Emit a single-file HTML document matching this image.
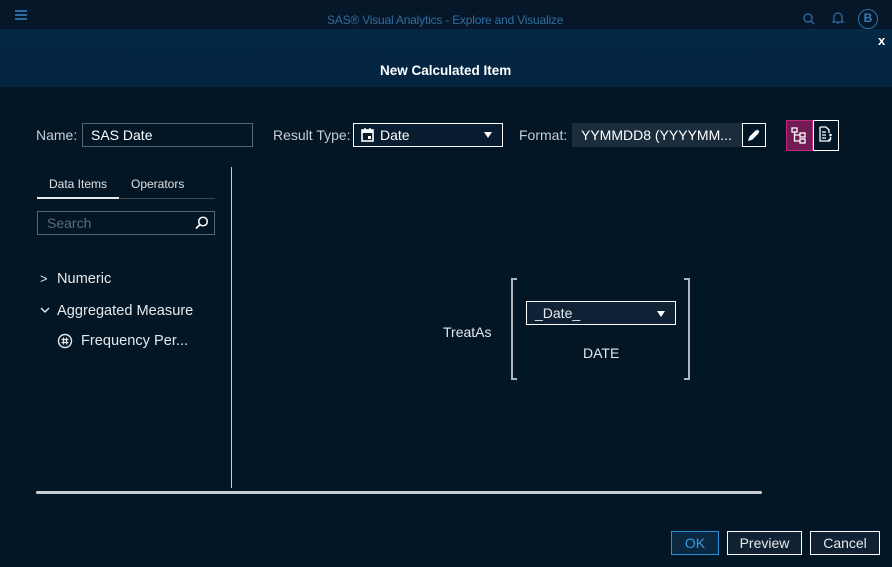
<!DOCTYPE html>
<html><head><meta charset="utf-8"><style>
*{box-sizing:border-box;margin:0;padding:0}
body{width:892px;height:567px;overflow:hidden;background:#031625;font-family:"Liberation Sans",sans-serif;color:#e6e9ec;position:relative}
.abs{position:absolute}
.top{left:0;top:0;width:892px;height:29px;background:#06172a}
.hdr{left:0;top:29px;width:892px;height:58px;background:linear-gradient(#052845,#032440)}
.t{font-size:14px;white-space:nowrap}
.tr{font-size:14.6px}
.box{border:1px solid #5a6470}
</style></head><body>
<div class="abs top"></div>
<div class="abs" style="left:15px;top:10px;width:12px;height:2px;background:#2c6aa0;box-shadow:0 4px 0 #2c6aa0,0 8px 0 #2c6aa0"></div>
<div class="abs t" style="left:327px;top:13px;font-size:12px;color:#2f6d9f;letter-spacing:-0.2px">SAS® Visual Analytics - Explore and Visualize</div>
<svg class="abs" style="left:802px;top:12px" width="14" height="14" viewBox="0 0 14 14"><circle cx="6" cy="6" r="4" fill="none" stroke="#2c6aa0" stroke-width="1.4"/><path d="M9 9l3 3" stroke="#2c6aa0" stroke-width="1.4"/></svg>
<svg class="abs" style="left:832px;top:11px" width="12" height="14" viewBox="0 0 12 14"><path d="M2 10V6a4 4 0 018 0v4l1 1H1z M5 12h2" fill="none" stroke="#2c6aa0" stroke-width="1.3"/></svg>
<div class="abs" style="left:858px;top:9px;width:20px;height:20px;border:1.5px solid #2f72aa;border-radius:50%;color:#3a80bb;font-size:12px;font-weight:bold;text-align:center;line-height:17px">B</div>
<div class="abs hdr"></div>
<div class="abs t" style="left:878px;top:33px;font-size:13px;font-weight:bold;color:#fff">x</div>
<div class="abs t" style="left:380px;top:63px;font-size:13.5px;font-weight:bold;color:#fff">New Calculated Item</div>

<div class="abs t" style="left:36px;top:127px;color:#c8ced4">Name:</div>
<div class="abs box" style="left:82px;top:123px;width:171px;height:24px"></div>
<div class="abs t" style="left:91px;top:127px;color:#fff">SAS Date</div>
<div class="abs t" style="left:273px;top:127px;color:#c8ced4">Result Type:</div>
<div class="abs" style="left:353px;top:123px;width:150px;height:24px;border:1px solid #fff;background:#071d2f"></div>
<svg class="abs" style="left:361px;top:127px" width="13" height="15" viewBox="0 0 13 15"><rect x="1" y="3" width="11" height="11" fill="none" stroke="#fff" stroke-width="1.6"/><rect x="1" y="3" width="11" height="3" fill="#fff"/><path d="M4 1v3M9 1v3" stroke="#fff" stroke-width="1.5"/><rect x="7" y="9" width="3" height="3" fill="#fff"/></svg>
<div class="abs t" style="left:380px;top:127px;color:#fff">Date</div>
<div class="abs" style="left:484px;top:132px;border:4px solid transparent;border-top:6px solid #fff;border-bottom:0"></div>
<div class="abs t" style="left:519px;top:127px;color:#c8ced4">Format:</div>
<div class="abs" style="left:572px;top:123px;width:170px;height:24px;background:#1b2d3d"></div>
<div class="abs t" style="left:581px;top:127px;color:#fff">YYMMDD8 (YYYYMM...</div>
<div class="abs" style="left:742px;top:123px;width:24px;height:24px;border:1px solid #fff"></div>
<svg class="abs" style="left:747px;top:128px" width="14" height="14" viewBox="0 0 14 14"><path d="M2 12l1-3 6-6 2 2-6 6z M10 2l2 2" fill="#fff" stroke="#fff" stroke-width="1.3"/></svg>
<div class="abs" style="left:786px;top:120px;width:27px;height:31px;background:#731b55;border:1px solid #c2287a"></div>
<svg class="abs" style="left:791px;top:127px" width="17" height="17" viewBox="0 0 17 17"><g fill="none" stroke="#fff" stroke-width="1.3"><rect x="1" y="1" width="5" height="4"/><rect x="9" y="6" width="5" height="4"/><rect x="9" y="12" width="5" height="4"/><path d="M3.5 5v9H9M3.5 8H9"/></g></svg>
<div class="abs" style="left:813px;top:120px;width:26px;height:31px;border:1px solid #fff"></div>
<svg class="abs" style="left:818px;top:126px" width="16" height="17" viewBox="0 0 16 17"><path d="M2 1h6l3 3v3M11 13v2H2V1" fill="none" stroke="#fff" stroke-width="1.3"/><path d="M4 6h4M4 9h4M4 12h4" stroke="#fff" stroke-width="1.2"/><circle cx="12.5" cy="9" r="1.3" fill="#fff"/><path d="M12.5 11v2l-1 2" stroke="#fff" stroke-width="1.4"/></svg>

<div class="abs t" style="left:49px;top:177px;font-size:12px;color:#dfe3e7">Data Items</div>
<div class="abs t" style="left:131px;top:177px;font-size:12px;color:#dfe3e7">Operators</div>
<div class="abs" style="left:37px;top:198px;width:178px;height:1px;background:#3a4654"></div>
<div class="abs" style="left:37px;top:197px;width:82px;height:2px;background:#e6e9ec"></div>
<div class="abs box" style="left:37px;top:211px;width:178px;height:24px"></div>
<div class="abs t" style="left:47px;top:215px;color:#5f6a76">Search</div>
<svg class="abs" style="left:194px;top:215px" width="16" height="16" viewBox="0 0 16 16"><circle cx="9" cy="6.5" r="4.3" fill="none" stroke="#fff" stroke-width="1.5"/><path d="M6 9.5l-4 4" stroke="#fff" stroke-width="1.6"/></svg>
<div class="abs t" style="left:40px;top:271px;font-size:13px">&gt;</div>
<div class="abs t tr" style="left:57px;top:271px">Numeric</div>
<svg class="abs" style="left:40px;top:307px" width="10" height="8" viewBox="0 0 10 8"><path d="M1 1l4 4 4-4" fill="none" stroke="#e6e9ec" stroke-width="1.4"/></svg>
<div class="abs t tr" style="left:57px;top:303px">Aggregated Measure</div>
<svg class="abs" style="left:57px;top:333px" width="16" height="16" viewBox="0 0 16 16"><circle cx="8" cy="8" r="6.5" fill="none" stroke="#e6e9ec" stroke-width="1.4"/><path d="M6.5 4.5v7M9.5 4.5v7M4.5 6.5h7M4.5 9.5h7" stroke="#e6e9ec" stroke-width="1.2"/></svg>
<div class="abs t tr" style="left:81px;top:333px">Frequency Per...</div>
<div class="abs" style="left:231px;top:167px;width:1px;height:321px;background:#c8ced4"></div>

<div class="abs t" style="left:443px;top:324px">TreatAs</div>
<div class="abs" style="left:511px;top:278px;width:6px;height:102px;border:2px solid #aeb5bd;border-right:0"></div>
<div class="abs" style="left:684px;top:278px;width:6px;height:102px;border:2px solid #aeb5bd;border-left:0"></div>
<div class="abs" style="left:526px;top:301px;width:150px;height:24px;border:1px solid #fff;background:#0f2235"></div>
<div class="abs t" style="left:535px;top:305px">_Date_</div>
<div class="abs" style="left:657px;top:311px;border:4px solid transparent;border-top:6px solid #fff;border-bottom:0"></div>
<div class="abs t" style="left:583px;top:345px">DATE</div>

<div class="abs" style="left:36px;top:491px;width:726px;height:3px;background:#c8ced4;border-radius:2px"></div>
<div class="abs" style="left:671px;top:531px;width:48px;height:24px;border:1px solid #2d8fd8;background:#0a2840;color:#3d9ae0;font-size:14px;text-align:center;line-height:22px">OK</div>
<div class="abs" style="left:727px;top:531px;width:75px;height:24px;border:1px solid #fff;background:#0f2132;font-size:14px;text-align:center;line-height:22px">Preview</div>
<div class="abs" style="left:810px;top:531px;width:70px;height:24px;border:1px solid #fff;background:#0f2132;font-size:14px;text-align:center;line-height:22px">Cancel</div>
</body></html>
